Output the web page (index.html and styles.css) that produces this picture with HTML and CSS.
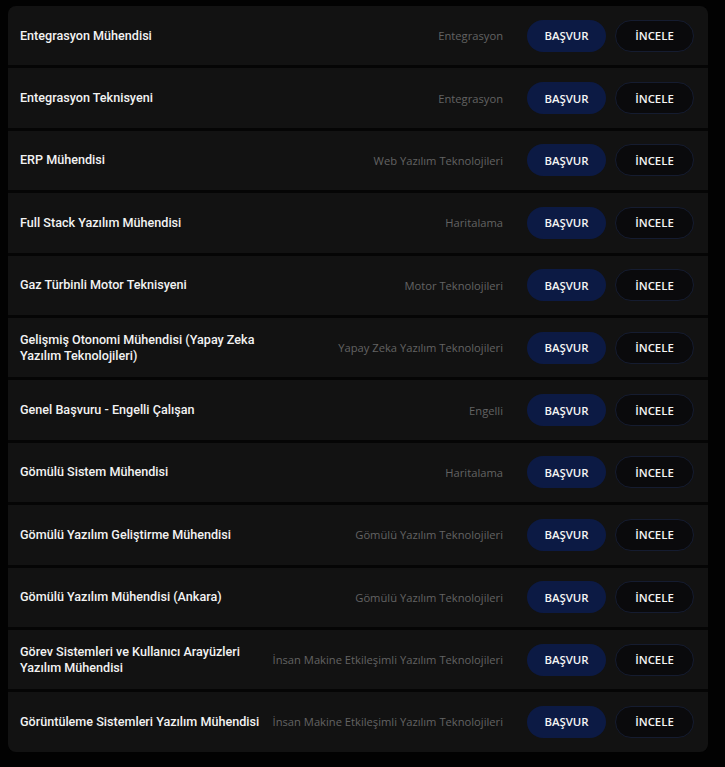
FILE: index.html
```html
<!DOCTYPE html>
<html lang="tr">
<head>
<meta charset="utf-8">
<link rel="stylesheet" href="styles.css">
</head>
<body>
<div class="list">
  <div class="row"><div class="title">Entegrasyon Mühendisi</div><div class="cat">Entegrasyon</div><button class="btn apply">BAŞVUR</button><button class="btn view">İNCELE</button></div>
  <div class="row"><div class="title">Entegrasyon Teknisyeni</div><div class="cat">Entegrasyon</div><button class="btn apply">BAŞVUR</button><button class="btn view">İNCELE</button></div>
  <div class="row"><div class="title">ERP Mühendisi</div><div class="cat">Web Yazılım Teknolojileri</div><button class="btn apply">BAŞVUR</button><button class="btn view">İNCELE</button></div>
  <div class="row"><div class="title">Full Stack Yazılım Mühendisi</div><div class="cat">Haritalama</div><button class="btn apply">BAŞVUR</button><button class="btn view">İNCELE</button></div>
  <div class="row"><div class="title">Gaz Türbinli Motor Teknisyeni</div><div class="cat">Motor Teknolojileri</div><button class="btn apply">BAŞVUR</button><button class="btn view">İNCELE</button></div>
  <div class="row"><div class="title">Gelişmiş Otonomi Mühendisi (Yapay Zeka Yazılım Teknolojileri)</div><div class="cat">Yapay Zeka Yazılım Teknolojileri</div><button class="btn apply">BAŞVUR</button><button class="btn view">İNCELE</button></div>
  <div class="row"><div class="title">Genel Başvuru - Engelli Çalışan</div><div class="cat">Engelli</div><button class="btn apply">BAŞVUR</button><button class="btn view">İNCELE</button></div>
  <div class="row"><div class="title">Gömülü Sistem Mühendisi</div><div class="cat">Haritalama</div><button class="btn apply">BAŞVUR</button><button class="btn view">İNCELE</button></div>
  <div class="row"><div class="title">Gömülü Yazılım Geliştirme Mühendisi</div><div class="cat">Gömülü Yazılım Teknolojileri</div><button class="btn apply">BAŞVUR</button><button class="btn view">İNCELE</button></div>
  <div class="row"><div class="title">Gömülü Yazılım Mühendisi (Ankara)</div><div class="cat">Gömülü Yazılım Teknolojileri</div><button class="btn apply">BAŞVUR</button><button class="btn view">İNCELE</button></div>
  <div class="row"><div class="title">Görev Sistemleri ve Kullanıcı Arayüzleri Yazılım Mühendisi</div><div class="cat">İnsan Makine Etkileşimli Yazılım Teknolojileri</div><button class="btn apply">BAŞVUR</button><button class="btn view">İNCELE</button></div>
  <div class="row"><div class="title">Görüntüleme Sistemleri Yazılım Mühendisi</div><div class="cat">İnsan Makine Etkileşimli Yazılım Teknolojileri</div><button class="btn apply">BAŞVUR</button><button class="btn view">İNCELE</button></div>
</div>
</body>
</html>
```
FILE: styles.css
```css
html, body {
  background: #020202;
}
body {
  margin: 6px 8px 0 8px;
}
.list {
  width: 700px;
  display: flex;
  flex-direction: column;
  gap: 3px;
  background: #050505;
  border-radius: 8px;
  overflow: hidden;
}
.row {
  height: 59.4px;
  display: flex;
  align-items: center;
  background: #121212;
  padding: 0 14px 0 12px;
  box-sizing: border-box;
}
.title {
  width: 248px;
  flex: none;
  font-family: Roboto, "Noto Sans", sans-serif;
  font-weight: 500;
  font-size: 12.6px;
  line-height: 16px;
  color: #f2f2f2;
}
.cat {
  flex: 1;
  min-width: 0;
  text-align: right;
  margin-right: 24px;
  font-family: "Open Sans", "Noto Sans", sans-serif;
  font-size: 11.2px;
  color: #636363;
  white-space: nowrap;
}
.btn {
  width: 79px;
  height: 32px;
  border-radius: 16px;
  font-family: "Open Sans", "Noto Sans", sans-serif;
  font-weight: 600;
  font-size: 11.4px;
  color: #f4f4f4;
  padding: 0;
  flex: none;
  cursor: pointer;
}
.apply {
  background: #0c1a44;
  border: none;
  margin-right: 9px;
}
.view {
  background: #0a0a0c;
  border: 1px solid #151c30;
}
```
